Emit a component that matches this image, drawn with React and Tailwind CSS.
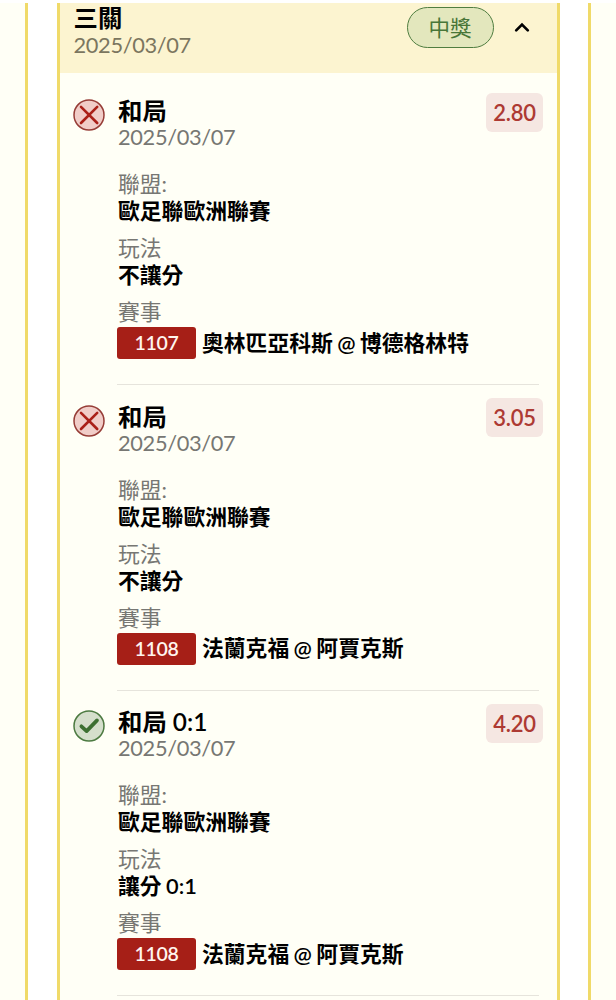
const legs = [
  { won: false, pick: '和局', odds: '2.80', league: '歐足聯歐洲聯賽', play: '不讓分', code: '1107', match: '奧林匹亞科斯 @ 博德格林特' },
  { won: false, pick: '和局', odds: '3.05', league: '歐足聯歐洲聯賽', play: '不讓分', code: '1108', match: '法蘭克福 @ 阿賈克斯' },
  { won: true, pick: '和局 0:1', odds: '4.20', league: '歐足聯歐洲聯賽', play: '讓分 0:1', code: '1108', match: '法蘭克福 @ 阿賈克斯' },
];

function StatusIcon({ won }) {
  return won ? (
    <svg className="mt-4 h-8 w-8 shrink-0" viewBox="0 0 32 32" fill="none">
      <circle cx="16" cy="16" r="15" fill="#d5dfcc" stroke="#4c7a41" strokeWidth="1.5" />
      <path d="M8.4 16.3 L13.6 21.1 L24 10.4" stroke="#3d7032" strokeWidth="3.7" strokeLinecap="round" strokeLinejoin="round" />
    </svg>
  ) : (
    <svg className="mt-4 h-8 w-8 shrink-0" viewBox="0 0 32 32" fill="none">
      <circle cx="16" cy="16" r="15" fill="#f1cdc8" stroke="#963c36" strokeWidth="1.5" />
      <path d="M8 7.8 L24.2 24 M24.2 7.8 L8 24" stroke="#aa2018" strokeWidth="2.6" strokeLinecap="round" />
    </svg>
  );
}

function Field({ label, value }) {
  return (
    <div className="mb-[11px]">
      <div className="h-[26px] leading-[26px] text-[#777773]">{label}</div>
      <div className="h-[27px] font-semibold leading-[27px] text-black [word-spacing:-1px]">{value}</div>
    </div>
  );
}

function Leg({ leg }) {
  return (
    <div className="flex h-[305.5px] pl-[13.5px]">
      <div className="pt-[3.5px]"><StatusIcon won={leg.won} /></div>
      <div className="relative ml-3 h-full w-[422px] border-b-[1.5px] border-[#e6e4dc] pt-[18.5px] text-[21.8px]">
        <div className="pl-px">
          <div className="h-[26px] text-[24.4px] font-semibold leading-[26px] text-black">{leg.pick}</div>
          <div className="-mt-px mb-[21px] h-[27px] text-[21.8px] leading-[27px] tracking-[-0.35px] text-[#777773]">2025/03/07</div>
          <Field label="聯盟:" value={leg.league} />
          <Field label="玩法" value={leg.play} />
          <div className="h-[26px] leading-[26px] text-[#777773]">賽事</div>
        </div>
        <div className="mt-0.5 flex h-8 items-center">
          <span className="flex h-8 w-[79px] items-center justify-center rounded-[3px] bg-[#a61f17] text-[19.5px] font-semibold tracking-[-0.3px] text-[#fff5ee]">{leg.code}</span>
          <span className="ml-[6px] whitespace-nowrap font-semibold text-black [word-spacing:-1px]">{leg.match}</span>
        </div>
        <span className="absolute -right-[4px] top-[13px] flex h-[39px] w-[57px] items-center justify-center rounded-[6px] bg-[#f5e7e2] text-[22px] font-semibold tracking-[-0.3px] text-[#ad3a33]">{leg.odds}</span>
      </div>
    </div>
  );
}

export default function App() {
  return (
    <div className="h-[1000px] w-[616px] overflow-hidden bg-white pt-[3px] font-['Lato','Noto_Sans_CJK_TC',sans-serif]">
      <div className="flex h-full justify-between">
        <div className="h-full w-7 border-r-[3px] border-[#f0da69] bg-[#fffff6]" />
        <main className="h-full w-[503px] overflow-hidden border-x-[3.5px] border-[#f0da69] bg-[#fffff6]">
          <header className="flex h-[70px] justify-between bg-[#fcf4d0] pl-[14px]">
            <div className="pt-0.5">
              <div className="h-[26px] text-[24.4px] font-semibold leading-[26px] text-black">三關</div>
              <div className="h-[27px] text-[21.8px] leading-[27px] tracking-[-0.35px] text-[#7b765f]">2025/03/07</div>
            </div>
            <div className="flex items-start pr-[27px] pt-1">
              <span className="flex h-[41px] w-[87px] items-center justify-center rounded-full border border-[#4f7d40] bg-[#e3e7bd] text-[21.5px] text-[#487638]"><span className="mt-0.5">中獎</span></span>
              <svg className="ml-5 mt-3 h-4 w-4" viewBox="0 0 16 16" fill="none">
                <path d="M2.2 11.4 L8 5.6 L13.8 11.4" stroke="#000" strokeWidth="2.7" strokeLinecap="round" />
              </svg>
            </div>
          </header>
          <div className="pt-[6.5px]">
            {legs.map((leg) => <Leg key={leg.odds} leg={leg} />)}
          </div>
        </main>
        <div className="h-full w-7 border-l-[3px] border-[#f0da69] bg-[#fffff6]" />
      </div>
    </div>
  );
}
